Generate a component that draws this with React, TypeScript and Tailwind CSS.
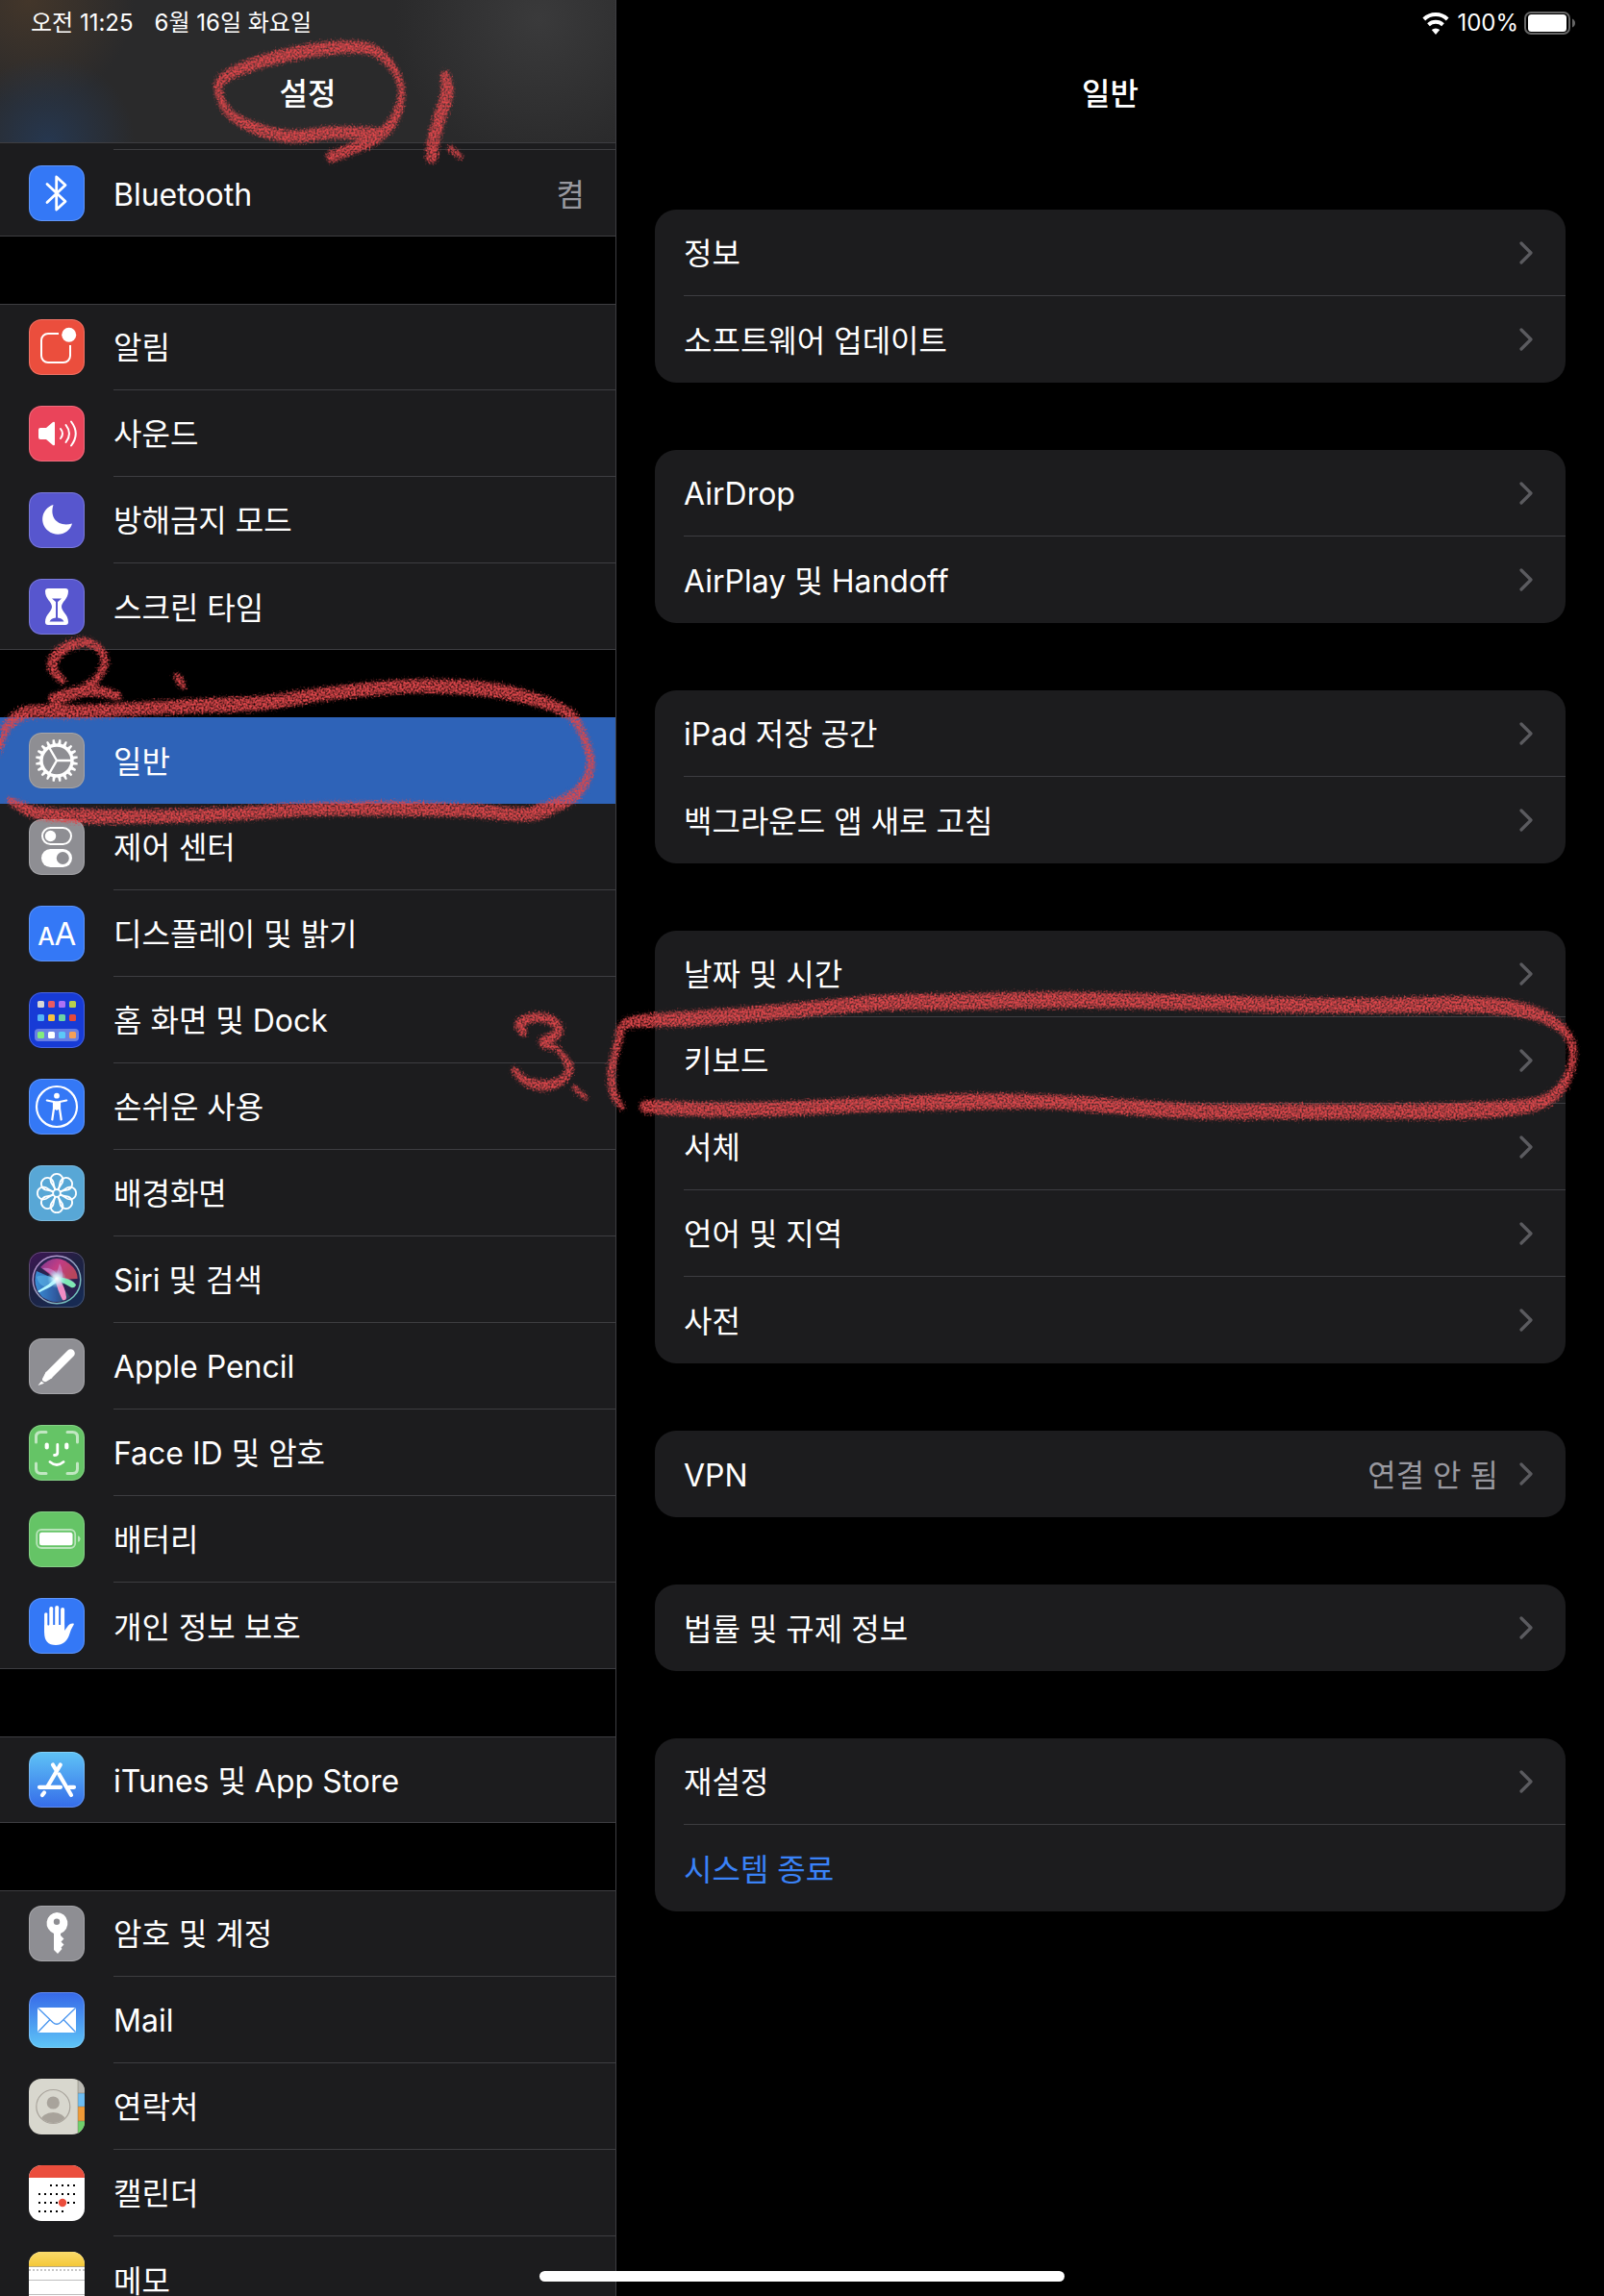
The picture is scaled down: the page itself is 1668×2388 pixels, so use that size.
import type { ReactNode } from 'react';

type SidebarItem = {
  label: string;
  icon: ReactNode;
  value?: string;
  active?: boolean;
};

type SettingItem = {
  label: string;
  value?: string;
  action?: boolean;
};

// [x, y, stroke width]
type Point = [number, number, number];

function Tile({ fill, edge = true, children }: { fill: string; edge?: boolean; children: ReactNode }) {
  return (
    <svg viewBox="0 0 58 58" className="h-[58px] w-[58px] shrink-0 rounded-[13px]" aria-hidden="true">
      <rect width="58" height="58" fill={fill} />
      {children}
      {edge && (
        <rect x="0.5" y="0.5" width="57" height="57" rx="12.5" fill="none" stroke="#fff" strokeOpacity="0.22" />
      )}
    </svg>
  );
}

function BluetoothIcon() {
  return (
    <Tile fill="#3478f6">
      <path
        d="M19 19.5 38 37.5 28.7 46V12L38 20.5 19 38.5"
        fill="none"
        stroke="#fff"
        strokeWidth="2.8"
        strokeLinecap="round"
        strokeLinejoin="round"
      />
    </Tile>
  );
}

function NotificationsIcon() {
  return (
    <Tile fill="#eb4e3d">
      <path
        d="M31 15H20a7 7 0 0 0-7 7v16a7 7 0 0 0 7 7h16a7 7 0 0 0 7-7V27"
        fill="none"
        stroke="#fff"
        strokeWidth="2"
      />
      <circle cx="41.7" cy="16.3" r="7.5" fill="#fff" />
    </Tile>
  );
}

function SoundIcon() {
  return (
    <Tile fill="#ea445a">
      <path d="M12 23h6l7-6q2-1 2 1v22q0 2-2 1l-7-6h-6q-2 0-2-2v-8q0-2 2-2z" fill="#fff" />
      <path
        d="M33 24q4 5 0 10M38.5 20q7 9 0 18M44 16.5q9.5 12.5 0 25"
        fill="none"
        stroke="#fff"
        strokeWidth="2"
        strokeLinecap="round"
      />
    </Tile>
  );
}

function MoonIcon() {
  return (
    <Tile fill="#5756ce">
      <path d="M25.5 13C13 17 10.5 32 20 40c9 7.5 22.5 3 25-7.5C31 36.5 21 27 25.5 13z" fill="#fff" />
    </Tile>
  );
}

function HourglassIcon() {
  return (
    <Tile fill="#5756ce">
      <path
        d="M20 10h18q3 0 3 3c0 8-7 11-7 16s7 8 7 16q0 3-3 3H20q-3 0-3-3c0-8 7-11 7-16s-7-8-7-16q0-3 3-3z"
        fill="#fff"
      />
      <path d="M24 20.500h10l-4 3.5v16.5q5 .5 6.5 4h-15q1.5-3.5 6.5-4V24z" fill="#5756ce" />
    </Tile>
  );
}

function GearIcon() {
  return (
    <Tile fill="#8e8e93">
      {Array.from({ length: 20 }, (_, i) => (
        <path key={i} d="M27.1 13 28 7h2l.9 6z" fill="#fff" transform={`rotate(${i * 18 + 9} 29 29)`} />
      ))}
      <circle cx="29" cy="29" r="16" fill="none" stroke="#fff" strokeWidth="3.4" />
      <path d="M29 29h15M29 29l-7.5-13M29 29l-7.5 13" stroke="#fff" strokeWidth="2.4" />
    </Tile>
  );
}

function ControlCenterIcon() {
  return (
    <Tile fill="#8e8e93">
      <rect x="14" y="9" width="30" height="17" rx="8.5" fill="none" stroke="#fff" strokeWidth="2" />
      <circle cx="22.5" cy="17.5" r="5.7" fill="#fff" />
      <rect x="13" y="31" width="32" height="19" rx="9.5" fill="#fff" />
      <circle cx="35.3" cy="40.5" r="6.5" fill="#8e8e93" />
    </Tile>
  );
}

function DisplayIcon() {
  return (
    <Tile fill="#3478f6">
      <g fill="#fff" fontFamily="Inter, sans-serif" textAnchor="middle">
        <text x="18" y="41" fontSize="25" fontWeight="500">A</text>
        <text x="38" y="41" fontSize="33" fontWeight="400">A</text>
      </g>
    </Tile>
  );
}

const homeColors = [
  ['#d6d6d6', '#e85a63', '#ac72f5', '#b8d04e'],
  ['#54b4f7', '#f5c242', '#6dd4a4', '#e5493a'],
  ['#83ec7d', '#ffffff', '#5cc8f8', '#f39f58'],
];

function HomeScreenIcon() {
  return (
    <Tile fill="#173bd6">
      <rect x="6" y="38" width="46" height="13" rx="4" fill="#fff" fillOpacity="0.35" />
      {homeColors.map((row, r) =>
        row.map((color, c) => (
          <rect key={color} x={9 + c * 11} y={[9, 23, 41][r]} width="7" height="7" rx="1.5" fill={color} />
        ))
      )}
    </Tile>
  );
}

function AccessibilityIcon() {
  return (
    <Tile fill="#3478f6">
      <circle cx="29" cy="29" r="21" fill="none" stroke="#fff" strokeWidth="2.2" />
      <circle cx="29" cy="17.7" r="2.9" fill="#fff" />
      <path
        d="M18.8 22.5 26 24v7l-1.7 11.5M39.2 22.5 32 24v7l1.7 11.5"
        fill="none"
        stroke="#fff"
        strokeWidth="2.2"
        strokeLinecap="round"
        strokeLinejoin="round"
      />
      <path d="M25 23.2h8V32h-2.5L29 33l-1.5-1H25z" fill="#fff" />
    </Tile>
  );
}

function WallpaperIcon() {
  return (
    <Tile fill="#58a7d6">
      <g fill="none" stroke="#fff" strokeWidth="1.8">
        {Array.from({ length: 8 }, (_, i) => (
          <path
            key={i}
            d="M28 25.5 23.2 18A6.4 6.4 0 1 1 34.8 18L30 25.5"
            transform={`rotate(${i * 45} 29 29)`}
          />
        ))}
        <circle cx="29" cy="29" r="3.8" />
      </g>
    </Tile>
  );
}

function SiriIcon() {
  return (
    <Tile fill="url(#siri-bg)">
      <defs>
        <linearGradient id="siri-bg" x1="0" y1="0" x2="0.6" y2="1">
          <stop offset="0" stopColor="#3f1656" />
          <stop offset="0.5" stopColor="#1f2140" />
          <stop offset="1" stopColor="#172a52" />
        </linearGradient>
        <linearGradient id="siri-ring" x1="0" y1="0" x2="1" y2="1">
          <stop offset="0" stopColor="#c18bd0" />
          <stop offset="0.6" stopColor="#8fa9c0" />
          <stop offset="1" stopColor="#5fd0b8" />
        </linearGradient>
        <linearGradient id="siri-top" x1="0" y1="0" x2="1" y2="0.5">
          <stop offset="0" stopColor="#7a3a94" />
          <stop offset="0.5" stopColor="#c23c84" />
          <stop offset="1" stopColor="#b8455c" />
        </linearGradient>
        <linearGradient id="siri-low" x1="0" y1="0" x2="1" y2="0">
          <stop offset="0" stopColor="#3a8fd8" />
          <stop offset="0.6" stopColor="#2f5aa0" />
          <stop offset="1" stopColor="#2b4456" />
        </linearGradient>
        <radialGradient id="siri-glow">
          <stop offset="0" stopColor="#fff" />
          <stop offset="0.4" stopColor="#d4f8ff" stopOpacity="0.8" />
          <stop offset="1" stopColor="#8fe0ff" stopOpacity="0" />
        </radialGradient>
        <filter id="siri-soft">
          <feGaussianBlur stdDeviation="0.7" />
        </filter>
      </defs>
      <circle cx="29" cy="29" r="25" fill="#2a2250" />
      <g filter="url(#siri-soft)">
        <path d="M29 29 12 16Q29-2 46 16q5 6 4.5 12z" fill="url(#siri-top)" />
        <path d="M29 29 8 20q-5 16 6 27 15 10 29 0z" fill="url(#siri-low)" />
        <path d="M30 28 14 17q9-1 15 5l3-10q4 7 3 15 10 0 14 8z" fill="#d0a4ec" fillOpacity="0.5" />
        <path d="M29 29Q16 22 8 26q2 8 8 10z" fill="#5fb6e8" fillOpacity="0.6" />
        <path d="M30 26Q20 35 9 41q2 2 4 0 12-5 19-12z" fill="#b4f8ff" />
        <path d="M29 26q14 1 20 8-1 4-5 3-8-5-16-7z" fill="#7fe8b4" />
        <path d="M27 27q3 14 8 23 4 1 4-3-1-10-8-20z" fill="#f08cc4" />
      </g>
      <circle cx="29" cy="28" r="10" fill="url(#siri-glow)" />
      <circle cx="29" cy="29" r="24.8" fill="none" stroke="url(#siri-ring)" strokeWidth="1.5" />
    </Tile>
  );
}

function PencilIcon() {
  return (
    <Tile fill="#8e8e93">
      <path d="M43.5 15.5 21 38" stroke="#fff" strokeWidth="8.6" strokeLinecap="round" />
      <path d="M18 34.5 14 42q-.5 1.5 1 2.5t3 .5l6.500-4z" fill="#fff" />
      <path d="m13 44.5 3 2.3-6.5 2.2z" fill="#fff" />
    </Tile>
  );
}

function FaceIdIcon() {
  return (
    <Tile fill="#65c466">
      <path
        d="M7.5 18v-5.5q0-5 5-5H18M40 7.5h5.5q5 0 5 5V18M50.5 40v5.5q0 5-5 5H40M18 50.5h-5.5q-5 0-5-5V40"
        fill="none"
        stroke="#fff"
        strokeOpacity="0.6"
        strokeWidth="3"
        strokeLinecap="round"
      />
      <path d="M18.7 20.5v3M39.3 20.5v3" stroke="#fff" strokeWidth="4.2" strokeLinecap="round" />
      <path
        d="M29.8 20.5V29q0 2.5-3.3 2.5M22 38.5q7 6 14 0"
        fill="none"
        stroke="#fff"
        strokeWidth="2.8"
        strokeLinecap="round"
      />
    </Tile>
  );
}

function BatteryIcon() {
  return (
    <Tile fill="#65c466">
      <rect x="8.2" y="19" width="40" height="19" rx="5" fill="none" stroke="#fff" strokeOpacity="0.55" strokeWidth="1.8" />
      <rect x="11" y="21.7" width="34.5" height="13.5" rx="2.5" fill="#fff" />
      <path d="M51 25.2q2.600.8 2.6 3.3T51 31.800z" fill="#fff" fillOpacity="0.55" />
    </Tile>
  );
}

function PrivacyIcon() {
  return (
    <Tile fill="#3478f6">
      <g stroke="#fff" strokeLinecap="round">
        <path d="M17.8 17v18" strokeWidth="3.4" />
        <path d="M23.3 11v22M29.2 10v22M35.1 12v22" strokeWidth="4" />
      </g>
      <path
        d="M16.1 28h21v6l4-5.5q2-2.5 5.4-2 1 .8-.5 2.5-2 3-3.5 8-3.5 12-14.5 12-11.9 0-11.9-13z"
        fill="#fff"
      />
      <path d="M20.3 17v11.5M26.2 12v16M32.2 12v16" stroke="#3478f6" strokeWidth="1.3" />
    </Tile>
  );
}

function AppStoreIcon() {
  return (
    <Tile fill="url(#store-bg)">
      <defs>
        <linearGradient id="store-bg" x1="0" y1="0" x2="0" y2="1">
          <stop offset="0" stopColor="#5fc3f6" />
          <stop offset="1" stopColor="#356ce9" />
        </linearGradient>
      </defs>
      <g stroke="#fff" strokeWidth="4.2" strokeLinecap="round" fill="none">
        <path d="M32.8 13.5 19.5 36M25 13.5l4 6.5M31.5 23.5 44 45M16 42.5l-2 2.5" />
        <path d="M11 36.8h22M42 36.8h5" />
      </g>
    </Tile>
  );
}

function KeyIcon() {
  return (
    <Tile fill="#8e8e93">
      <path
        d="M29 7a11.3 11.3 0 0 1 4 21.9v2.1l3.5 3.5-3 3 3 3-3 3 1 1.5-4.5 5-4-4V28.9A11.3 11.3 0 0 1 29 7z"
        fill="#fff"
      />
      <circle cx="29" cy="16.7" r="3.2" fill="#8e8e93" />
    </Tile>
  );
}

function MailIcon() {
  return (
    <Tile fill="url(#mail-bg)">
      <defs>
        <linearGradient id="mail-bg" x1="0" y1="0" x2="0" y2="1">
          <stop offset="0" stopColor="#3668e8" />
          <stop offset="1" stopColor="#5fc6f7" />
        </linearGradient>
      </defs>
      <rect x="9" y="16" width="40" height="26" rx="1.5" fill="#fff" />
      <path
        d="m9.5 16.5 15.5 15q4 3.5 8 0l15.5-15M9.5 41.5 21.5 29M48.5 41.5 36.5 29"
        fill="none"
        stroke="#4a96f0"
        strokeWidth="1.3"
      />
    </Tile>
  );
}

function ContactsIcon() {
  return (
    <Tile fill="#d8d7ce" edge={false}>
      <rect x="51" width="7" height="15" fill="#b9b8b2" />
      <rect x="51" y="15" width="7" height="14" fill="#6cbdf3" />
      <rect x="51" y="29" width="7" height="15" fill="#ef9a37" />
      <rect x="51" y="44" width="7" height="14" fill="#6fd06b" />
      <path d="M51 0v58M51 15h7M51 29h7M51 44h7" stroke="#7c7566" strokeOpacity="0.6" strokeWidth="0.8" />
      <clipPath id="contact-clip">
        <circle cx="25.3" cy="29" r="17" />
      </clipPath>
      <circle cx="25.3" cy="29" r="17.5" fill="none" stroke="#a8a39b" strokeWidth="1.2" />
      <circle cx="25.3" cy="25" r="6.6" fill="#a8a39b" />
      <ellipse cx="25.3" cy="44" rx="13" ry="9" fill="#a8a39b" clipPath="url(#contact-clip)" />
    </Tile>
  );
}

function CalendarIcon() {
  const weeks = [
    [2, 7],
    [0, 7],
    [0, 7],
    [0, 5],
  ];
  return (
    <Tile fill="#ffffff" edge={false}>
      <rect width="58" height="13" fill="#eb4e3d" />
      {weeks.map(([from, to], w) =>
        Array.from({ length: to - from }, (_, i) => (
          <rect key={`${w}-${i}`} x={10 + (from + i) * 6} y={20 + w * 9} width="2" height="2" fill="#000" />
        ))
      )}
      <circle cx="35" cy="39" r="4.2" fill="#eb4e3d" />
    </Tile>
  );
}

function NotesIcon() {
  return (
    <Tile fill="#ffffff" edge={false}>
      <defs>
        <linearGradient id="notes-top" x1="0" y1="0" x2="0" y2="1">
          <stop offset="0" stopColor="#fbdb6b" />
          <stop offset="1" stopColor="#f4c838" />
        </linearGradient>
      </defs>
      <rect width="58" height="15" fill="url(#notes-top)" />
      <path d="M0 15.5h58" stroke="#b5a985" />
      <path d="M0 19h58" stroke="#c6c6c6" strokeWidth="2" strokeDasharray="2 2" />
      <path d="M0 29.5h58M0 44.5h58" stroke="#bdbdbd" />
    </Tile>
  );
}

const sidebarGroups: SidebarItem[][] = [
  [{ label: 'Bluetooth', icon: <BluetoothIcon />, value: '켬' }],
  [
    { label: '알림', icon: <NotificationsIcon /> },
    { label: '사운드', icon: <SoundIcon /> },
    { label: '방해금지 모드', icon: <MoonIcon /> },
    { label: '스크린 타임', icon: <HourglassIcon /> },
  ],
  [
    { label: '일반', icon: <GearIcon />, active: true },
    { label: '제어 센터', icon: <ControlCenterIcon /> },
    { label: '디스플레이 및 밝기', icon: <DisplayIcon /> },
    { label: '홈 화면 및 Dock', icon: <HomeScreenIcon /> },
    { label: '손쉬운 사용', icon: <AccessibilityIcon /> },
    { label: '배경화면', icon: <WallpaperIcon /> },
    { label: 'Siri 및 검색', icon: <SiriIcon /> },
    { label: 'Apple Pencil', icon: <PencilIcon /> },
    { label: 'Face ID 및 암호', icon: <FaceIdIcon /> },
    { label: '배터리', icon: <BatteryIcon /> },
    { label: '개인 정보 보호', icon: <PrivacyIcon /> },
  ],
  [{ label: 'iTunes 및 App Store', icon: <AppStoreIcon /> }],
  [
    { label: '암호 및 계정', icon: <KeyIcon /> },
    { label: 'Mail', icon: <MailIcon /> },
    { label: '연락처', icon: <ContactsIcon /> },
    { label: '캘린더', icon: <CalendarIcon /> },
    { label: '메모', icon: <NotesIcon /> },
  ],
];

const generalGroups: SettingItem[][] = [
  [{ label: '정보' }, { label: '소프트웨어 업데이트' }],
  [{ label: 'AirDrop' }, { label: 'AirPlay 및 Handoff' }],
  [{ label: 'iPad 저장 공간' }, { label: '백그라운드 앱 새로 고침' }],
  [
    { label: '날짜 및 시간' },
    { label: '키보드' },
    { label: '서체' },
    { label: '언어 및 지역' },
    { label: '사전' },
  ],
  [{ label: 'VPN', value: '연결 안 됨' }],
  [{ label: '법률 및 규제 정보' }],
  [{ label: '재설정' }, { label: '시스템 종료', action: true }],
];

function Chevron() {
  return (
    <svg viewBox="0 0 14 24" className="h-6 w-[14px]" aria-hidden="true">
      <path
        d="M2 2l10 10L2 22"
        fill="none"
        stroke="#5b5b5f"
        strokeWidth="3.2"
        strokeLinecap="round"
        strokeLinejoin="round"
      />
    </svg>
  );
}

function SidebarRow({ item, last }: { item: SidebarItem; last: boolean }) {
  return (
    <li>
      <a
        href="#"
        aria-current={item.active ? 'page' : undefined}
        className={`flex h-[90px] items-center gap-[30px] pl-[30px] ${item.active ? 'bg-[#2e63b8]' : ''}`}
      >
        {item.icon}
        <span
          className={`flex h-full flex-1 items-center justify-between pr-8 pt-[3px] ${
            last || item.active ? '' : 'border-b border-[#3d3d41]'
          }`}
        >
          {item.label}
          {item.value && <span className="text-[#98989f]">{item.value}</span>}
        </span>
      </a>
    </li>
  );
}

function Sidebar() {
  return (
    <aside className="flex w-[641px] shrink-0 flex-col overflow-hidden border-r border-[#3d3d41]">
      <header className="h-[149px] shrink-0 border-b border-[#3d3d41] bg-[#2a2a2b] bg-[radial-gradient(circle_at_50px_148px,#26374f_0,transparent_90px),radial-gradient(circle_at_30px_0px,#43362a_0,transparent_110px),radial-gradient(circle_at_560px_20px,#3a3a3b_0,transparent_150px)] text-white">
        <div className="flex h-12 items-center gap-[22px] pl-8 text-2xl">
          <span>오전 11:25</span>
          <span>6월 16일 화요일</span>
        </div>
        <h1 className="flex h-[100px] items-center justify-center text-[32px] font-medium">설정</h1>
      </header>

      <nav aria-label="설정" className="text-[32px] text-white">
        <div className="h-[7px] bg-[#1c1c1e] pl-[118px]">
          <div className="h-full border-b border-[#3d3d41]" />
        </div>
        {sidebarGroups.map((group, i) => (
          <ul
            key={i}
            className={`relative bg-[#1c1c1e] after:pointer-events-none after:absolute after:inset-0 after:border-b after:border-[#3d3d41] ${
              i === 0 ? '' : 'mt-[70px]'
            } ${i === 0 || group[0].active ? '' : 'after:border-t'}`}
          >
            {group.map((item, j) => (
              <SidebarRow key={item.label} item={item} last={j === group.length - 1} />
            ))}
          </ul>
        ))}
      </nav>
    </aside>
  );
}

function StatusIcons() {
  return (
    <div className="flex h-12 items-center justify-end pr-[29px] text-2xl">
      <svg viewBox="0 0 28 26" className="mr-2 h-[26px] w-7" aria-hidden="true">
        <path d="M1.8 9a17.5 17.5 0 0 1 24.4 0" fill="none" stroke="#fff" strokeWidth="4" />
        <path d="M6.5 14.8a11 11 0 0 1 15 0" fill="none" stroke="#fff" strokeWidth="4" />
        <path d="M14 25 9.8 20a6.4 6.4 0 0 1 8.4 0z" fill="#fff" />
      </svg>
      <span>100%</span>
      <svg viewBox="0 0 54 30" className="ml-1.5 h-[30px] w-[54px]" aria-hidden="true">
        <rect x="1" y="4" width="46" height="22" rx="6" fill="none" stroke="#fff" strokeOpacity="0.4" strokeWidth="2" />
        <rect x="4" y="6" width="40" height="18" rx="3.5" fill="#fff" />
        <path d="M50 10.5q3 1.5 3 4.5t-3 4.5z" fill="#fff" fillOpacity="0.4" />
      </svg>
    </div>
  );
}

function GeneralPane() {
  return (
    <main className="flex-1 text-[32px] text-white">
      <header className="h-[218px]">
        <StatusIcons />
        <h2 className="flex h-[100px] items-center justify-center font-medium">일반</h2>
      </header>

      <div className="flex flex-col gap-[70px] px-10">
        {generalGroups.map((group, i) => (
          <ul key={i} className="rounded-[22px] bg-[#1c1c1e] pl-[30px]">
            {group.map((item, j) => (
              <li key={item.label} className={j < group.length - 1 ? 'h-[90px] border-b border-[#3d3d41]' : 'h-[90px]'}>
                {item.action ? (
                  <button type="button" className="flex h-full w-full items-center pt-[3px] text-[#3a82f7]">
                    {item.label}
                  </button>
                ) : (
                  <a href="#" className="flex h-full items-center gap-[22px] pr-[34px]">
                    <span className="flex-1 pt-[3px]">{item.label}</span>
                    {item.value && <span className="pt-[3px] text-[#98989f]">{item.value}</span>}
                    <Chevron />
                  </a>
                )}
              </li>
            ))}
          </ul>
        ))}
      </div>
    </main>
  );
}

const strokes: Point[][] = [
  // title circle and "1."
  [
    [396, 139, 13], [345, 138, 13], [303, 142, 13], [265, 133, 12], [238, 117, 9], [227, 93, 8], [236, 79, 11],
    [269, 65, 13], [320, 53, 14], [370, 49, 13], [396, 57, 10], [414, 80, 7], [417, 103, 7], [408, 127, 10],
    [388, 145, 12], [345, 163, 12],
  ],
  [[463, 78, 9], [465, 97, 13], [457, 123, 13], [451, 145, 13], [449, 164, 12]],
  [[468, 154, 6], [479, 163, 5]],
  // "2." and the loop around the selected row
  [
    [65, 708, 7], [54, 693, 10], [63, 677, 11], [84, 668, 10], [101, 673, 8], [109, 688, 8], [101, 705, 8],
    [84, 718, 10], [57, 727, 13], [84, 719, 12], [104, 719, 11], [122, 724, 9],
  ],
  [[183, 702, 4], [187, 708, 8], [191, 715, 4]],
  [
    [-2, 782, 7], [5, 760, 9], [16, 747, 12], [34, 740, 13], [84, 740, 14], [147, 737, 14], [210, 734, 15],
    [274, 731, 15], [337, 722, 14], [421, 714, 14], [497, 716, 15], [547, 725, 14], [590, 741, 11], [605, 762, 8],
    [614, 790, 8], [610, 810, 9], [596, 828, 12], [564, 843, 15], [543, 847, 14], [484, 843, 14], [400, 841, 15],
    [316, 842, 14], [252, 846, 14], [168, 849, 14], [97, 849, 15], [42, 846, 13], [20, 838, 10], [10, 832, 6],
  ],
  // "3." and the loop around the keyboard row
  [
    [544, 1074, 8], [541, 1064, 10], [558, 1058, 10], [576, 1063, 10], [581, 1074, 8], [566, 1084, 12],
    [578, 1090, 6], [589, 1103, 7], [592, 1113, 8], [582, 1125, 9], [564, 1129, 11], [546, 1124, 9], [535, 1113, 7],
  ],
  [[597, 1131, 5], [609, 1142, 5]],
  [
    [647, 1152, 5], [638, 1137, 8], [636, 1113, 8], [643, 1083, 8], [648, 1067, 9], [666, 1062, 13], [725, 1059, 16],
    [813, 1052, 15], [915, 1043, 16], [996, 1042, 17], [1106, 1040, 17], [1223, 1042, 16], [1325, 1045, 16],
    [1428, 1046, 16], [1530, 1045, 17], [1589, 1052, 15], [1622, 1068, 10], [1635, 1088, 8], [1633, 1113, 8],
    [1620, 1135, 11], [1594, 1149, 14], [1530, 1155, 17], [1435, 1156, 16], [1325, 1156, 16], [1252, 1156, 16],
    [1179, 1152, 16], [1091, 1146, 15], [996, 1146, 17], [901, 1149, 15], [813, 1153, 15], [740, 1154, 15],
    [672, 1151, 14],
  ],
];

// Catmull-Rom samples through the points, width interpolated along with them
function smooth(points: Point[]) {
  const samples: Point[] = [];
  for (let i = 0; i < points.length - 1; i++) {
    const p0 = points[Math.max(i - 1, 0)];
    const p1 = points[i];
    const p2 = points[i + 1];
    const p3 = points[Math.min(i + 2, points.length - 1)];
    for (let s = 0; s <= 8; s++) {
      if (s === 8 && i < points.length - 2) continue;
      const t = s / 8;
      samples.push(
        [0, 1, 2].map(
          (k) =>
            0.5 *
            (2 * p1[k] +
              (p2[k] - p0[k]) * t +
              (2 * p0[k] - 5 * p1[k] + 4 * p2[k] - p3[k]) * t * t +
              (3 * p1[k] - p0[k] - 3 * p2[k] + p3[k]) * t * t * t)
        ) as Point
      );
    }
  }
  return samples;
}

function Annotations() {
  return (
    <svg
      viewBox="0 0 1668 2388"
      className="pointer-events-none absolute left-0 top-0 h-auto w-full"
      aria-hidden="true"
    >
      <defs>
        <filter
          id="crayon"
          filterUnits="userSpaceOnUse"
          x="0"
          y="0"
          width="1668"
          height="2388"
          colorInterpolationFilters="sRGB"
        >
          <feTurbulence type="fractalNoise" baseFrequency="0.5" numOctaves="3" seed="4" result="noise" />
          <feGaussianBlur in="SourceGraphic" stdDeviation="1.8" result="soft" />
          <feDisplacementMap in="soft" in2="noise" scale="9" xChannelSelector="R" yChannelSelector="B" result="rough" />
          <feColorMatrix in="noise" values="0 0 0 0 0  0 0 0 0 0  0 0 0 0 0  0 2 0 0 -0.25" result="grain" />
          <feComposite in="rough" in2="grain" operator="in" />
        </filter>
      </defs>
      <g filter="url(#crayon)" stroke="#dc464a" strokeLinecap="round">
        {strokes.map((points, i) => {
          const line = smooth(points);
          return (
            <g key={i}>
              {line.slice(1).map(([x, y, w], j) => (
                <path key={j} d={`M${line[j][0]} ${line[j][1]}L${x} ${y}`} strokeWidth={w} />
              ))}
            </g>
          );
        })}
      </g>
    </svg>
  );
}

export default function App() {
  return (
    <div
      lang="ko"
      className="relative flex h-screen overflow-hidden bg-black font-['Inter','Noto_Sans_CJK_KR',sans-serif]"
    >
      <Sidebar />
      <GeneralPane />
      <Annotations />
      <div className="absolute inset-x-0 bottom-[15px] flex justify-center">
        <div className="h-[11px] w-[546px] rounded-full bg-white" />
      </div>
    </div>
  );
}
